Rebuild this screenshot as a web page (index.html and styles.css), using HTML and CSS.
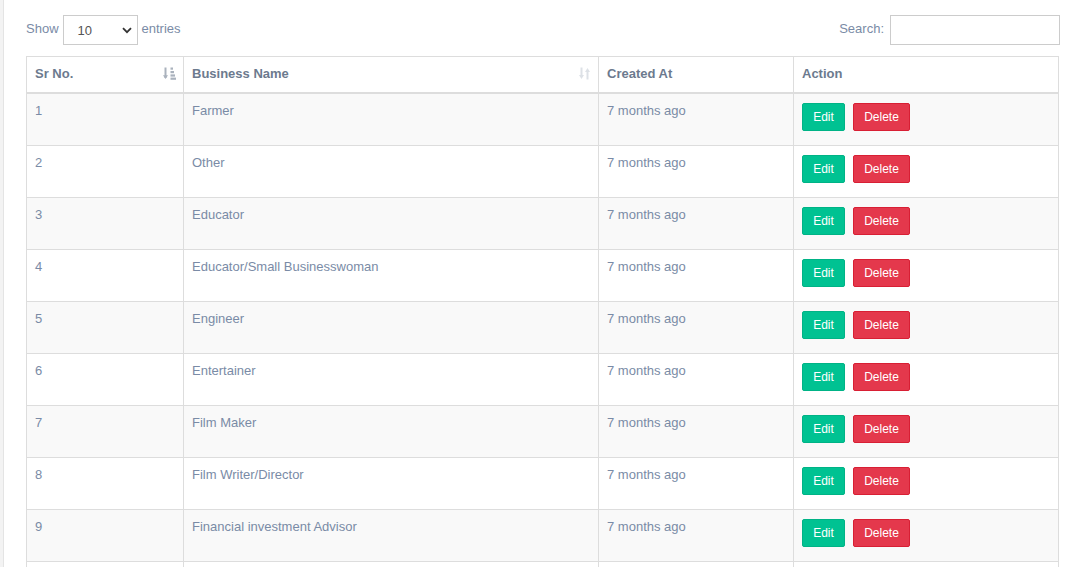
FILE: index.html
```html
<!DOCTYPE html>
<html>
<head>
<meta charset="utf-8">
<link rel="stylesheet" href="styles.css">
</head>
<body>
<div class="panel">
  <div class="controls">
    <label class="length"><span class="lbl">Show</span>
      <span class="select">10
        <svg class="chev" width="10" height="7" viewBox="0 0 10 7"><path d="M1 1.2 L5 5.2 L9 1.2" fill="none" stroke="#333" stroke-width="1.8"/></svg>
      </span>
      <span class="lbl">entries</span></label>
    <label class="search"><span class="lbl">Search:</span> <span class="input"></span></label>
  </div>
  <table class="grid">
    <thead>
      <tr>
        <th class="c1"><div class="th-in"><span>Sr No.</span>
          <svg class="sort" width="13" height="13" viewBox="0 0 13 13">
            <path d="M2.5 0.5 V11" stroke="#aab2bd" stroke-width="2"/>
            <path d="M0 8.2 L2.5 12 L5 8.2 Z" fill="#aab2bd"/>
            <rect x="7.5" y="0.5" width="2.5" height="2.2" fill="#aab2bd"/>
            <rect x="7.5" y="4" width="3.5" height="2.2" fill="#aab2bd"/>
            <rect x="7.5" y="7.4" width="4.5" height="2.2" fill="#aab2bd"/>
            <rect x="7.5" y="10.6" width="5.5" height="2.2" fill="#aab2bd"/>
          </svg></div></th>
        <th class="c2"><div class="th-in"><span>Business Name</span>
          <svg class="sort" width="13" height="13" viewBox="0 0 13 13">
            <path d="M3.5 0.5 V10" stroke="#dde1e6" stroke-width="2"/>
            <path d="M1 8 L3.5 12 L6 8 Z" fill="#dde1e6"/>
            <path d="M9.5 3 V12.5" stroke="#dde1e6" stroke-width="2"/>
            <path d="M7 5 L9.5 1 L12 5 Z" fill="#dde1e6"/>
          </svg></div></th>
        <th class="c3">Created At</th>
        <th class="c4">Action</th>
      </tr>
    </thead>
    <tbody>
      <tr><td>1</td><td>Farmer</td><td>7 months ago</td><td><span class="btn edit">Edit</span><span class="btn del">Delete</span></td></tr>
      <tr><td>2</td><td>Other</td><td>7 months ago</td><td><span class="btn edit">Edit</span><span class="btn del">Delete</span></td></tr>
      <tr><td>3</td><td>Educator</td><td>7 months ago</td><td><span class="btn edit">Edit</span><span class="btn del">Delete</span></td></tr>
      <tr><td>4</td><td>Educator/Small Businesswoman</td><td>7 months ago</td><td><span class="btn edit">Edit</span><span class="btn del">Delete</span></td></tr>
      <tr><td>5</td><td>Engineer</td><td>7 months ago</td><td><span class="btn edit">Edit</span><span class="btn del">Delete</span></td></tr>
      <tr><td>6</td><td>Entertainer</td><td>7 months ago</td><td><span class="btn edit">Edit</span><span class="btn del">Delete</span></td></tr>
      <tr><td>7</td><td>Film Maker</td><td>7 months ago</td><td><span class="btn edit">Edit</span><span class="btn del">Delete</span></td></tr>
      <tr><td>8</td><td>Film Writer/Director</td><td>7 months ago</td><td><span class="btn edit">Edit</span><span class="btn del">Delete</span></td></tr>
      <tr><td>9</td><td>Financial investment Advisor</td><td>7 months ago</td><td><span class="btn edit">Edit</span><span class="btn del">Delete</span></td></tr>
      <tr><td></td><td></td><td></td><td></td></tr>
    </tbody>
  </table>
</div>
</body>
</html>
```
FILE: styles.css
```css
html, body {
  margin: 0;
  padding: 0;
}
body {
  background: #f3f3f3;
  font-family: "Liberation Sans", Arial, sans-serif;
  font-size: 13px;
  color: #7a8ba6;
  line-height: 19px;
}
.panel {
  margin-left: 3px;
  border-left: 1px solid #e4e4e4;
  background: #fff;
  padding: 15px 21px 0 22px;
  min-height: 567px;
  box-sizing: border-box;
}
.controls {
  display: flex;
  justify-content: space-between;
  align-items: center;
  height: 30px;
  margin-bottom: 11px;
}
.length, .search {
  display: flex;
  align-items: center;
  gap: 4px;
}
.lbl {
  padding-bottom: 3px;
}
.select {
  width: 75px;
  height: 30px;
  box-sizing: border-box;
  border: 1px solid #ccc;
  display: flex;
  align-items: center;
  justify-content: space-between;
  padding: 0 5px 0 14px;
  color: #555;
  font-size: 13px;
}
.chev { display: block; }
.search { gap: 6px; }
.input {
  display: block;
  width: 170px;
  height: 30px;
  box-sizing: border-box;
  border: 1px solid #ccc;
  margin-right: -1px;
}
.grid {
  width: 100%;
  border-collapse: collapse;
  border: 1px solid #ddd;
}
.grid th, .grid td {
  border: 1px solid #ddd;
  text-align: left;
  vertical-align: top;
}
.grid th {
  font-weight: bold;
  color: #6c7a8e;
  border-bottom: 2px solid #ddd;
  padding: 7px 8px 9px;
  height: 19px;
}
.grid td {
  padding: 7px 8px 8px;
  height: 36px;
}
.grid tbody tr:nth-child(odd) td {
  background: #f9f9f9;
}
.c1 { width: 140px; }
.c2 { width: 398px; }
.c3 { width: 178px; }
.th-in {
  display: flex;
  justify-content: space-between;
  align-items: center;
}
.sort { display: block; margin-right: -1px; }
.btn {
  display: inline-block;
  box-sizing: border-box;
  height: 28px;
  line-height: 26px;
  margin-top: 2px;
  font-size: 12px;
  color: #fff;
  border-radius: 2px;
  text-align: center;
  vertical-align: top;
}
.edit {
  width: 43px;
  background: #00c292;
  border: 1px solid #00b386;
}
.del {
  width: 57px;
  margin-left: 8px;
  background: #e4384c;
  border: 1px solid #d81f34;
}
```
